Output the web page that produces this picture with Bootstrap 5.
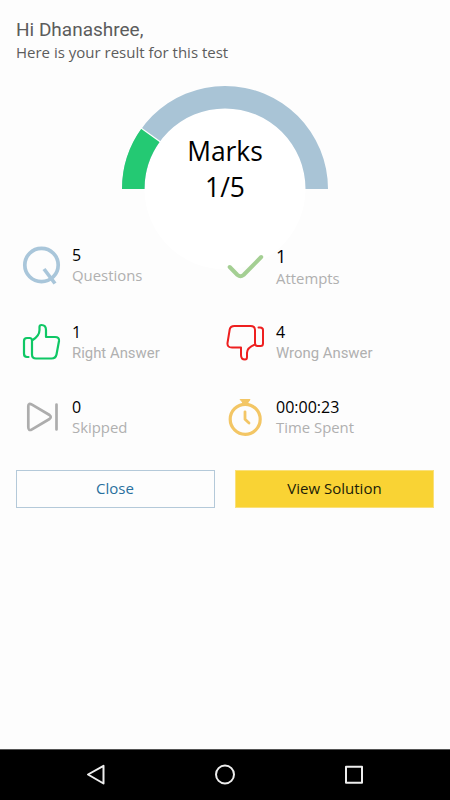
<!DOCTYPE html>
<html lang="en">
<head>
<meta charset="utf-8">
<meta name="viewport" content="width=device-width, initial-scale=1">
<title>Test result</title>
<link href="https://cdn.jsdelivr.net/npm/bootstrap@5.3.0/dist/css/bootstrap.min.css" rel="stylesheet">
<style>
body{background:#fdfdfd;font-family:"Open Sans","Noto Sans",sans-serif;color:#000}
.screen{height:800px;overflow:hidden}
.roboto{font-family:Roboto,sans-serif}
.result-head{height:86px;padding:18px 16px 0;color:#5c5c5c}
.hello{font-size:19px;line-height:24px}
.intro{font-size:15px;line-height:20px}
.gauge{height:154px}
.gauge-text{top:47px;font-size:26.4px;line-height:36px}
.stats{padding:0 16px;height:230px}
.stat-line{height:77px}
.stat-line + .stat-line{height:75px}
.stat-item{width:204px}
.stat-icon{width:56px;height:50px;flex:none}
.stat-value{font-size:16px;line-height:20px;padding-top:5px}
.stat-label{font-size:14.9px;line-height:21px;color:#b0b0b0}
.stat-label.roboto{line-height:23px}
.tall .stat-value{font-size:18px;line-height:23px}
.actions{padding:0 16px 0 15.5px;gap:20.500px}
.actions .btn{height:38px;font-size:15px;line-height:34px;padding:0 0 2px}
.btn-close-result{border-color:#b4c9d9;color:#29709d}
.btn-solution{background:#f9d334;border-color:#fae07a;color:#201c08}
.system-bar{height:51px;background:#000;border-top:1px solid #555}
</style>
<script src="https://cdn.jsdelivr.net/npm/bootstrap@5.3.0/dist/js/bootstrap.bundle.min.js"></script>
</head>
<body>
<main class="screen d-flex flex-column">
  <header class="result-head">
    <div class="hello roboto">Hi Dhanashree,</div>
    <div class="intro">Here is your result for this test</div>
  </header>
  <section class="gauge position-relative">
    <svg class="d-block overflow-visible" width="450" height="154" viewBox="0 85.600 450 154">
      <circle cx="225" cy="188.500" r="80.500" fill="#fff"/>
      <path d="M122 188.500A103 103 0 0 1 328 188.500H305.500A80.500 80.500 0 0 0 144.500 188.500Z" fill="#a9c4d6"/>
      <path d="M122 188.500A103 103 0 0 1 141.670 127.960L159.870 141.180A80.500 80.500 0 0 0 144.500 188.500Z" fill="#24c973"/>
      <path d="M141 127.500L160.500 141.600" stroke="#fff" stroke-width="1.2"/>
    </svg>
    <div class="gauge-text position-absolute start-0 w-100 text-center">Marks<br>1/5</div>
  </section>
  <section class="stats position-relative">
    <div class="stat-line d-flex">
      <div class="stat-item d-flex">
        <svg class="stat-icon" viewBox="16 240 56 50" fill="none" stroke="#a9c6da" stroke-width="3.700"><circle cx="41.500" cy="265" r="16.700"/><path d="M44 269L55 283.500"/></svg>
        <div><div class="stat-value">5</div><div class="stat-label">Questions</div></div>
      </div>
      <div class="stat-item d-flex tall">
        <svg class="stat-icon" viewBox="220 240 56 50" fill="none" stroke="#a4cf93" stroke-width="4" stroke-linecap="round" stroke-linejoin="round"><path d="M229.700 267L237.500 275Q240.500 277.500 243.500 275L261.200 257"/></svg>
        <div><div class="stat-value">1</div><div class="stat-label">Attempts</div></div>
      </div>
    </div>
    <div class="stat-line d-flex">
      <div class="stat-item d-flex">
        <svg class="stat-icon" viewBox="16 317 56 50" fill="none" stroke="#0fc765" stroke-width="2.200" stroke-linecap="round" stroke-linejoin="round"><path d="M32 340.500C37 337.500 39.500 334 39.500 330V327Q39.500 325 41.500 325Q46 325 46 330V337H55Q59.500 337 59 341L56.500 354.500Q55.700 358.500 51.500 358.500H36Q32 358.500 32 354.500V340.500Q32 338 29.500 338H27Q24 338 24 341V353.500Q24 357 27 357H28.500"/></svg>
        <div><div class="stat-value">1</div><div class="stat-label roboto">Right Answer</div></div>
      </div>
      <div class="stat-item d-flex">
        <svg class="stat-icon" viewBox="220 317 56 50" fill="none" stroke="#ee2020" stroke-width="2" stroke-linecap="round" stroke-linejoin="round"><path d="M255 344.500C250 346.500 247 348.500 247 353V357Q247 359.500 245 359.500Q241 359.500 241 355V347.500H232Q227 347.500 227.500 343L229.700 329.500Q230.300 326 234.500 326H250.500Q255 326 255 330V343Q255 346 257.500 346H260.500Q263 346 263 343.500V330Q263 327.500 260 327.500H258.500"/></svg>
        <div><div class="stat-value">4</div><div class="stat-label roboto">Wrong Answer</div></div>
      </div>
    </div>
    <div class="stat-line d-flex">
      <div class="stat-item d-flex">
        <svg class="stat-icon" viewBox="16 392 56 50" fill="none" stroke="#adadad" stroke-width="2.700" stroke-linecap="round" stroke-linejoin="round"><path d="M28.300 406V427Q28.300 431.500 32 429.300L49.500 419Q52 417 49.500 415L32 404.700Q28.300 402.500 28.300 406ZM56.500 404.500V429.500"/></svg>
        <div><div class="stat-value">0</div><div class="stat-label">Skipped</div></div>
      </div>
      <div class="stat-item d-flex">
        <svg class="stat-icon" viewBox="220 392 56 50" fill="none" stroke="#f3c665" stroke-width="3.200" stroke-linecap="round" stroke-linejoin="round"><circle cx="245.200" cy="419.300" r="15"/><path d="M245 411.800V419.300L249 423" stroke-width="2.800"/><path d="M240.500 399.500H250L248 402.500V404.500H242.500V402.500Z" fill="#f3c665" stroke-width="1"/></svg>
        <div><div class="stat-value">00:00:23</div><div class="stat-label">Time Spent</div></div>
      </div>
    </div>
  </section>
  <div class="actions d-flex">
    <button class="btn btn-close-result rounded-0 flex-fill w-50">Close</button>
    <button class="btn btn-solution rounded-0 flex-fill w-50">View Solution</button>
  </div>
  <nav class="system-bar mt-auto" aria-label="System">
    <svg class="d-block" width="450" height="50" viewBox="0 750 450 50" fill="none" stroke="#eee" stroke-width="2" stroke-linejoin="round"><path d="M88 774.500L103.500 765.800V783.500Z"/><circle cx="225" cy="774.500" r="9"/><rect x="346" y="766.800" width="16" height="16"/></svg>
  </nav>
</main>
</body>
</html>
